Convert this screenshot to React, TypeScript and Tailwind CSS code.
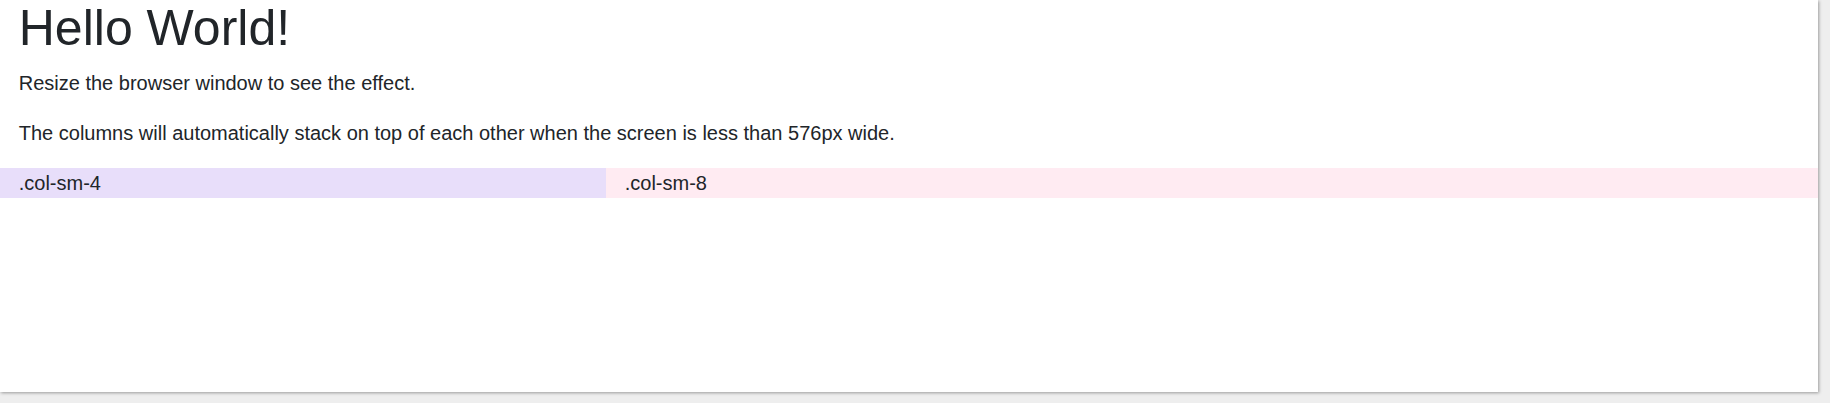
export default function App() {
  return (
    <div className="w-full h-[403px] bg-[#eeeeee] overflow-hidden">
      <div
        className="w-[1818px] h-[392px] bg-white shadow-[1px_1px_3px_rgba(0,0,0,0.35)] text-[#212529]"
        style={{ fontFamily: '"Liberation Sans", Arial, sans-serif' }}
      >
        <div className="px-[18.75px]">
          <h1 className="text-[50px] leading-[56px] font-normal mb-[12px]">Hello World!</h1>
          <p className="text-[20px] leading-[30px] mb-[20px]">
            Resize the browser window to see the effect.
          </p>
          <p className="text-[20px] leading-[30px] mb-[20px]">
            The columns will automatically stack on top of each other when the screen is less than 576px wide.
          </p>
        </div>
        <div className="flex text-[20px] leading-[30px]">
          <div className="w-[606px] px-[18.75px] bg-[#e8defa]">.col-sm-4</div>
          <div className="flex-1 px-[18.75px] bg-[#ffebf2]">.col-sm-8</div>
        </div>
      </div>
    </div>
  );
}
